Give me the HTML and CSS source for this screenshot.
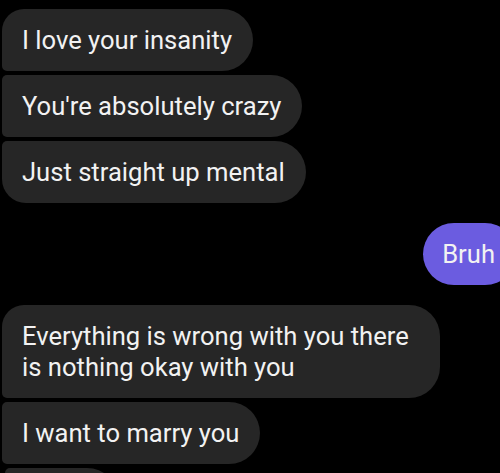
FILE: index.html
```html
<!DOCTYPE html>
<html lang="en">
<head>
    <meta charset="UTF-8">
    <meta name="viewport" content="width=device-width, initial-scale=1.0">
    <title>Chat</title>
    <link rel="stylesheet" href="styles.css">
</head>
<body>
    <div class="thread">
        <div class="group incoming">
            <div class="bubble first">I love your insanity</div>
            <div class="bubble">You're absolutely crazy</div>
            <div class="bubble last">Just straight up mental</div>
        </div>
        <div class="group outgoing">
            <div class="bubble">Bruh</div>
        </div>
        <div class="group incoming">
            <div class="bubble first wide">Everything is wrong with you there is nothing okay with you</div>
            <div class="bubble">I want to marry you</div>
            <div class="bubble last stub">&nbsp;</div>
        </div>
    </div>
</body>
</html>
```

FILE: styles.css
```css
body {
    margin: 0;
    padding: 0;
    background-color: #000;
    font-family: Roboto, "Liberation Sans", sans-serif;
    overflow: hidden;
}
.thread {
    display: flex;
    flex-direction: column;
    gap: 20px;
    padding-top: 9px;
    padding-left: 2px;
}
.group {
    display: flex;
    flex-direction: column;
    gap: 4px;
}
.incoming {
    align-items: flex-start;
}
.outgoing {
    align-items: flex-end;
    margin-right: -16px;
}
.bubble {
    box-sizing: border-box;
    padding: 15.5px 21px 15.5px 20px;
    font-size: 25.6px;
    line-height: 31px;
    color: #f2f2f2;
    background: #262626;
    border-radius: 5px 31px 31px 5px;
    max-width: 438px;
}
.incoming .first {
    border-top-left-radius: 22px;
}
.incoming .last {
    border-bottom-left-radius: 24px;
}
.wide {
    border-radius: 22px 31px 31px 5px;
}
.stub {
    width: 113px;
    margin-left: 3px;
}
.outgoing .bubble {
    background: #6b5ce0;
    border-radius: 31px;
    padding-left: 19px;
}
```
